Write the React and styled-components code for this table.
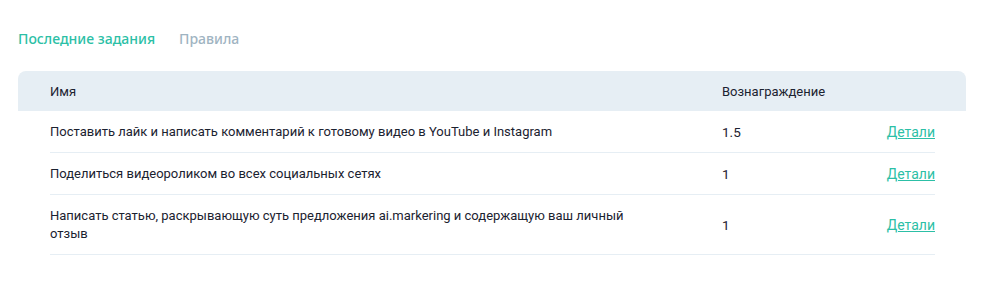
import styled, { createGlobalStyle } from 'styled-components'

const tasks = [
  {
    name: 'Поставить лайк и написать комментарий к готовому видео в YouTube и Instagram',
    reward: '1.5',
  },
  { name: 'Поделиться видеороликом во всех социальных сетях', reward: '1' },
  {
    name: 'Написать статью, раскрывающую суть предложения ai.markering и содержащую ваш личный отзыв',
    reward: '1',
  },
]

export default function App() {
  return (
    <>
      <GlobalStyle />
      <Page>
        <Tabs>
          <Tab active>Последние задания</Tab>
          <Tab>Правила</Tab>
        </Tabs>
        <Table>
          <HeadRow>
            <span>Имя</span>
            <span>Вознаграждение</span>
            <span />
          </HeadRow>
          {tasks.map((t, i) => (
            <Row key={i}>
              <Name>{t.name}</Name>
              <Reward>{t.reward}</Reward>
              <Details href="#">Детали</Details>
            </Row>
          ))}
        </Table>
      </Page>
    </>
  )
}

const GlobalStyle = createGlobalStyle`
  body {
    margin: 0;
    background: #fff;
    font-family: Roboto, 'Noto Sans', sans-serif;
    color: #1b2230;
  }
`

const Page = styled.main`
  padding: 29px 26px 0 18px;
`

const Tabs = styled.nav`
  display: flex;
  gap: 24px;
  margin-bottom: 22px;
`

const Tab = styled.button`
  border: 0;
  background: none;
  padding: 0;
  font-family: 'Noto Sans', sans-serif;
  font-size: 14px;
  line-height: 20px;
  font-weight: 500;
  cursor: pointer;
  color: ${({ active }) => (active ? '#2cbfa6' : '#9fb4c2')};
`

const Table = styled.section`
  display: flex;
  flex-direction: column;
`

const HeadRow = styled.div`
  display: grid;
  grid-template-columns: 672px 1fr auto;
  align-items: center;
  height: 40px;
  padding: 0 32px;
  background: #e6eef4;
  border-radius: 8px 8px 0 0;
  font-size: 13px;
`

const Row = styled.div`
  display: grid;
  grid-template-columns: 672px 1fr auto;
  align-items: center;
  margin: 0 31px 0 32px;
  padding: 12px 0 11px;
  border-bottom: 1px solid #e6eef4;
  font-size: 13px;
  line-height: 18px;
`

const Name = styled.span`
  max-width: 600px;
`

const Reward = styled.span`
  font-size: 13.5px;
`

const Details = styled.a`
  color: #2cbfa6;
  font-size: 14px;
  text-decoration: underline;
`
